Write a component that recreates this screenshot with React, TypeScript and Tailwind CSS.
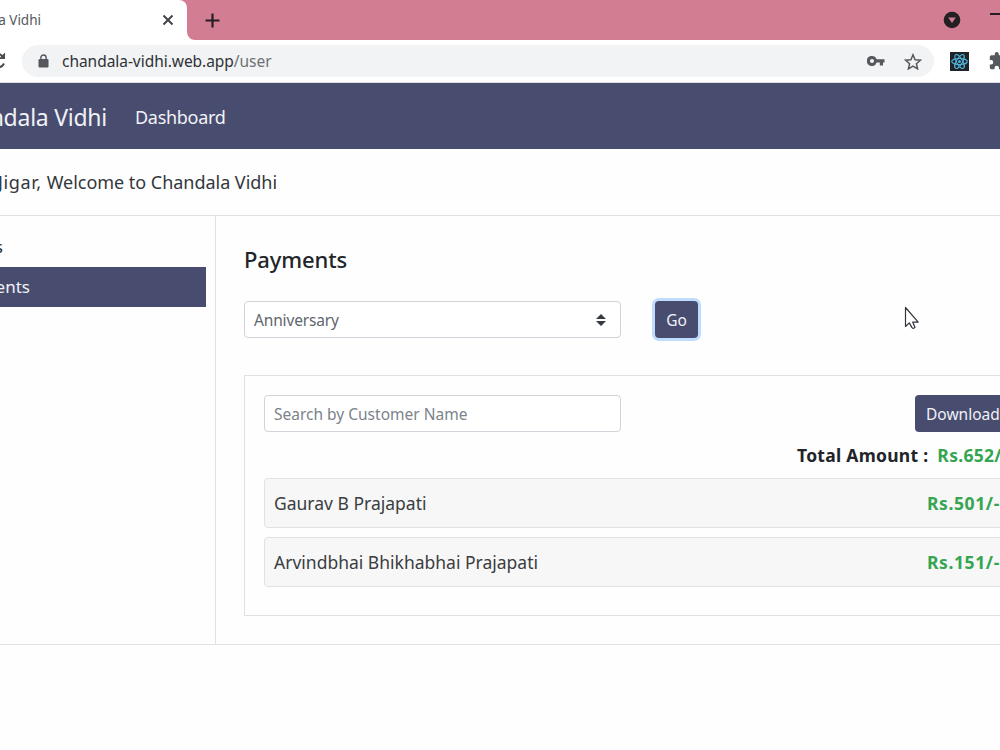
import { useState } from "react";

const ACCENT_BTN = "shrink-0 whitespace-nowrap rounded-[4px] bg-[#484d70] text-[#f1f1f6]";

const PAYMENTS = [
  { name: "Gaurav B Prajapati", amount: "Rs.501/-" },
  { name: "Arvindbhai Bhikhabhai Prajapati", amount: "Rs.151/-" },
];

export default function App() {
  return (
    <div className="h-[750px] w-[1000px] overflow-hidden bg-[#fefefe] font-['Noto_Sans','Open_Sans',sans-serif] text-[#212529]">
      <TabStrip />
      <Toolbar />
      <Navbar />
      <div className="flex h-[67px] items-center border-b border-[#dee2e6] pt-px">
        <p className="flex w-[277px] justify-end overflow-hidden whitespace-pre text-[18px] text-[#33373c]">
          <span className="mr-[5px] tracking-[0.6px]">Hello Jigar,</span>
          <span className="tracking-[-0.03px]">Welcome to Chandala Vidhi</span>
        </p>
      </div>
      <div className="flex h-[429px] border-b border-[#dee2e6]">
        <Sidebar />
        <Payments />
      </div>
    </div>
  );
}

function TabStrip() {
  return (
    <div className="flex h-10 bg-[#d27d92]">
      <div className="flex h-10 w-[187px] items-center justify-between rounded-tr-[8px] bg-white pr-[13px]">
        <span className="flex w-[41px] justify-end overflow-hidden whitespace-nowrap text-[13.5px] text-[#55585c]">Chandala Vidhi</span>
        <svg className="h-3 w-3" viewBox="0 0 12 12" stroke="#3f4246" strokeWidth="1.9">
          <path d="M1.5 1.5l9 9M10.5 1.5l-9 9" />
        </svg>
      </div>
      <svg className="h-2 w-2 self-end" viewBox="0 0 8 8">
        <path d="M0 0a8 8 0 0 0 8 8H0z" fill="#fff" />
      </svg>
      <svg className="ml-[10px] h-[15px] w-[15px] self-center" viewBox="0 0 15 15" stroke="#231f22" strokeWidth="2.2">
        <path d="M7.5.5v14M.5 7.5h14" />
      </svg>
      <svg className="ml-auto h-[18px] w-[18px] self-center" viewBox="0 0 18 18">
        <circle cx="9" cy="9" r="8.3" fill="#231f22" />
        <path d="M5.2 6.5h7.6L9 12z" fill="#d27d92" />
      </svg>
      <span className="ml-[29px] mt-[13px] h-[2px] w-[10px] bg-[#231f22]" />
    </div>
  );
}

function Toolbar() {
  return (
    <div className="flex h-[43px] items-center border-b border-[#dcdde2] bg-white">
      <svg className="h-[18px] w-[22px] shrink-0" viewBox="0 0 22 18" fill="none" stroke="#4b4e52" strokeWidth="2">
        <path d="M-2 1.8a7 7 0 0 1 5 3.6M4 11.5a7 7 0 0 1-5.5 4" />
        <path d="M5 .5v6.5h-6.5z" fill="#4b4e52" stroke="none" />
      </svg>
      <div className="flex h-8 w-[912px] shrink-0 items-center rounded-full bg-[#f1f3f4] pl-4 pr-3">
        <svg className="h-[15px] w-[11px]" viewBox="0 0 11 15" fill="none">
          <rect x=".5" y="5" width="10" height="8.5" rx="1" fill="#55585c" />
          <path d="M2.9 5.5V3.6a2.6 2.6 0 0 1 5.2 0v1.9" stroke="#55585c" strokeWidth="1.4" />
        </svg>
        <span className="ml-[13px] whitespace-nowrap pt-[2px] text-[15.5px] tracking-[-0.04px] text-[#303236]">
          chandala-vidhi.web.app<span className="text-[#6d7074]">/user</span>
        </span>
        <svg className="ml-auto h-[10px] w-[18px]" viewBox="0 0 18 10" fill="#55585c">
          <path fillRule="evenodd" d="M5 0a5 5 0 0 1 4.6 3.2H17.5v3.3H16V9.5h-3.2v-3H9.6A5 5 0 1 1 5 0zm0 2.9a2 2 0 1 0 0 4.1 2 2 0 0 0 0-4.1z" />
        </svg>
        <svg className="ml-[19px] h-[17px] w-[18px]" viewBox="0 0 18 17" fill="none" stroke="#55585c" strokeWidth="1.5">
          <path d="M9 1.8l2.1 4.9 5.3.5-4 3.5 1.2 5.2L9 13.2l-4.600 2.700 1.200-5.200-4-3.500 5.300-.5z" />
        </svg>
      </div>
      <svg className="ml-4 h-[19px] w-[19px] shrink-0" viewBox="0 0 19 19" fill="none" stroke="#4fb5da" strokeWidth="1.1">
        <rect width="19" height="19" fill="#20232a" stroke="none" />
        <ellipse cx="9.5" cy="9.5" rx="7.8" ry="3" />
        <ellipse cx="9.5" cy="9.5" rx="7.8" ry="3" transform="rotate(60 9.5 9.5)" />
        <ellipse cx="9.5" cy="9.5" rx="7.8" ry="3" transform="rotate(120 9.5 9.5)" />
        <circle cx="9.5" cy="9.5" r="1.5" fill="#4fb5da" stroke="none" />
      </svg>
      <svg className="ml-5 h-[18px] w-[18px] shrink-0" viewBox="1 1 22 22" fill="#55585c">
        <path d="M20.5 11H19V7c0-1.1-.9-2-2-2h-4V3.5a2.5 2.5 0 0 0-5 0V5H4c-1.1 0-2 .9-2 2v3.8h1.5a2.7 2.7 0 0 1 0 5.4H2V20c0 1.1.9 2 2 2h3.8v-1.5a2.7 2.7 0 0 1 5.4 0V22H17c1.1 0 2-.9 2-2v-4h1.5a2.5 2.5 0 0 0 0-5z" />
      </svg>
    </div>
  );
}

function Navbar() {
  return (
    <nav className="flex h-[66px] items-center bg-[#484d70] pt-px text-[#f1f1f6]">
      <span className="flex w-[107px] justify-end overflow-hidden whitespace-nowrap pt-px text-[23px] tracking-[-0.25px]">Chandala Vidhi</span>
      <a className="ml-[28px] pt-px text-[18px] tracking-[-0.3px]">Dashboard</a>
    </nav>
  );
}

function Sidebar() {
  return (
    <aside className="w-[216px] shrink-0 border-r border-[#dee2e6] pr-[9px] pt-[10px] text-[17px]">
      <div className="flex h-[41px] items-center">
        <span className="flex w-[3px] justify-end overflow-hidden">Users</span>
      </div>
      <div className="flex h-10 items-center bg-[#484d70] text-[#f1f1f6]">
        <span className="flex w-[30px] justify-end overflow-hidden">Payments</span>
      </div>
    </aside>
  );
}

function Payments() {
  const [search, setSearch] = useState("");
  const rows = PAYMENTS.filter((p) => p.name.toLowerCase().includes(search.toLowerCase()));

  return (
    <main className="min-w-0 grow pl-[28px] pt-[27px]">
      <h5 className="h-[33px] text-[22px] font-medium leading-8 tracking-[-0.1px]">Payments</h5>
      <div className="mt-[25px] flex">
        <div className="flex h-[37px] w-[377px] items-center justify-between rounded-[4px] border border-[#ced4da] bg-white pl-[9px] pr-[14px] text-[15.5px] text-[#5f666d]">
          <span className="pt-[2px] tracking-[-0.15px]">Anniversary</span>
          <svg className="h-3 w-[10px]" viewBox="0 0 10 12" fill="#343a40">
            <path d="M0 5l5-5 5 5zM0 7l5 5 5-5z" />
          </svg>
        </div>
        <button className={`${ACCENT_BTN} ml-[34px] h-[37px] w-[43px] pt-[2px] text-[15.5px] ring-[3px] ring-[#bfdcff]`}>Go</button>
        {/* mouse pointer */}
        <svg className="ml-[206px] mt-[5px] h-[25px] w-[17px]" viewBox="0 0 17 25" fill="#fff" stroke="#33343c" strokeWidth="1.2" strokeLinejoin="round">
          <path d="M1.5 1.5v19l3.8-3.6 2.700 4.700q1.400 1.400 3-.2l-2.300-5.300h5.500z" />
        </svg>
      </div>

      <section className="mt-[37px] h-[241px] w-[790px] border border-[#dee2e6] px-[19px] pt-[19px]">
        <div className="flex items-center">
          <input
            className="h-[37px] w-[357px] shrink-0 rounded-[4px] border border-[#ced4da] bg-white px-[9px] text-[15.5px] placeholder:text-[#7b838b]"
            placeholder="Search by Customer Name"
            value={search}
            onChange={(e) => setSearch(e.target.value)}
          />
          <button className={`${ACCENT_BTN} ml-[294px] h-[37px] px-[11px] pt-[2px] text-[15.5px]`}>Download</button>
        </div>
        <p className="flex h-[46px] items-center whitespace-nowrap pl-[533px] text-[17.5px] font-bold">
          <span className="tracking-[0.27px]">Total Amount :</span>
          <span className="ml-[9px] tracking-[0.3px] text-[#35a552]">Rs.652/-</span>
        </p>
        {rows.map((p) => (
          <div key={p.name} className="mb-[9px] flex h-[50px] items-center rounded-[4px] border border-[#e0e2e4] bg-[#f7f7f7] pl-[9px] pt-px text-[17.5px]">
            <span className="w-[653px] shrink-0 text-[#3a3d41]">{p.name}</span>
            <span className="font-bold tracking-[0.6px] text-[#35a552]">{p.amount}</span>
          </div>
        ))}
      </section>
    </main>
  );
}
